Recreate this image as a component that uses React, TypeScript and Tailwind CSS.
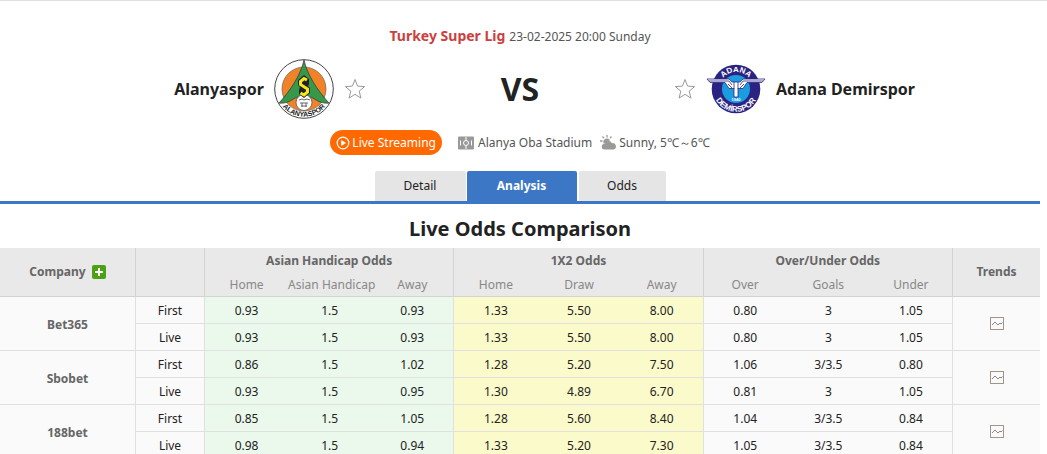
interface CompanyOdds {
  name: string;
  first: string[];
  live: string[];
}

const COMPANIES: CompanyOdds[] = [
  {
    name: "Bet365",
    first: ["0.93", "1.5", "0.93", "1.33", "5.50", "8.00", "0.80", "3", "1.05"],
    live: ["0.93", "1.5", "0.93", "1.33", "5.50", "8.00", "0.80", "3", "1.05"],
  },
  {
    name: "Sbobet",
    first: ["0.86", "1.5", "1.02", "1.28", "5.20", "7.50", "1.06", "3/3.5", "0.80"],
    live: ["0.93", "1.5", "0.95", "1.30", "4.89", "6.70", "0.81", "3", "1.05"],
  },
  {
    name: "188bet",
    first: ["0.85", "1.5", "1.05", "1.28", "5.60", "8.40", "1.04", "3/3.5", "0.84"],
    live: ["0.98", "1.5", "0.94", "1.33", "5.20", "7.30", "1.05", "3/3.5", "0.84"],
  },
];

const GROUPS = [
  { title: "Asian Handicap Odds", columns: ["Home", "Asian Handicap", "Away"], cell: "bg-[#ebf8ec]" },
  { title: "1X2 Odds", columns: ["Home", "Draw", "Away"], cell: "bg-[#fbfacb]" },
  { title: "Over/Under Odds", columns: ["Over", "Goals", "Under"], cell: "bg-[#fafafa]" },
];

export default function App() {
  return (
    <div className="h-screen overflow-hidden border-t border-[#e0e0e0] bg-white pr-[7px] font-['Noto_Sans',Tahoma,sans-serif] text-xs text-[#222]">
      <MatchHeader />
      <Tabs />
      <h2 className="pt-[11px] pb-[5px] text-center text-xl leading-7 font-bold">Live Odds Comparison</h2>
      <OddsTable />
    </div>
  );
}

function MatchHeader() {
  return (
    <header className="pt-6">
      <div className="flex items-baseline justify-center gap-1 leading-6">
        <a href="#league" className="text-sm font-bold text-[#cc3f3f]">
          Turkey Super Lig
        </a>
        <span className="text-[#555]">23-02-2025 20:00 Sunday</span>
      </div>

      <div className="mt-2.5 grid grid-cols-[1fr_308px_1fr] items-center">
        <div className="flex items-center justify-end gap-2.5">
          <a href="#alanyaspor" className="text-base font-bold">
            Alanyaspor
          </a>
          <AlanyasporLogo />
          <StarButton label="Follow Alanyaspor" />
        </div>
        <div className="text-center text-[32px] leading-[58px] font-bold">VS</div>
        <div className="flex items-center gap-2.5">
          <StarButton label="Follow Adana Demirspor" />
          <DemirsporLogo />
          <a href="#adana-demirspor" className="text-base font-bold">
            Adana Demirspor
          </a>
        </div>
      </div>

      <div className="mt-[11px] flex items-center justify-center gap-2 text-[#555]">
        <button className="mr-2 flex h-[25px] items-center gap-0.5 rounded-full bg-[#ff6900] px-1.5 text-white">
          <svg viewBox="0 0 14 14" className="size-3.5" fill="none">
            <circle cx="7" cy="7" r="5.8" stroke="currentColor" strokeWidth="1.2" />
            <path d="M5.2 4v6l4.8-3z" fill="currentColor" />
          </svg>
          Live Streaming
        </button>
        <span className="flex items-center gap-1">
          <StadiumIcon />
          Alanya Oba Stadium
        </span>
        <span className="flex items-center gap-0.5">
          <WeatherIcon />
          Sunny, 5℃～6℃
        </span>
      </div>
    </header>
  );
}

function Tabs() {
  return (
    <nav className="mt-4 flex h-[33px] justify-center border-b-3 border-[#3c77c6] text-center leading-[30px]">
      <a href="#detail" className="mr-px w-[91px] rounded-t-xs bg-[#e5e5e5]">
        Detail
      </a>
      <a href="#analysis" className="mr-0.5 w-[110px] rounded-t-xs bg-[#3c77c6] font-bold text-white">
        Analysis
      </a>
      <a href="#odds" className="w-[87px] rounded-t-xs bg-[#e5e5e5]">
        Odds
      </a>
    </nav>
  );
}

function OddsTable() {
  return (
    <table className="w-full table-fixed border-separate border-spacing-0 text-center">
      <colgroup>
        <col className="w-[136px]" />
        <col className="w-[69px]" />
        <col span={9} />
        <col className="w-[87px]" />
      </colgroup>
      <thead className="bg-[#e9e9e9] text-[#666]">
        <tr className="h-[25px]">
          <th rowSpan={2} className="border-r border-b border-[#d3d3d3]">
            <span className="flex items-center justify-center gap-1.5">
              Company
              <button aria-label="Add company" className="rounded-xs bg-[#4ba214] text-white">
                <svg viewBox="0 0 14 14" className="size-3.5">
                  <path d="M7 3v8M3 7h8" stroke="currentColor" strokeWidth="2" />
                </svg>
              </button>
            </span>
          </th>
          <th rowSpan={2} className="border-r border-b border-[#d3d3d3]" />
          {GROUPS.map((g) => (
            <th key={g.title} colSpan={3} className="border-r border-[#d3d3d3]">
              {g.title}
            </th>
          ))}
          <th rowSpan={2} className="border-b border-[#d3d3d3]">
            Trends
          </th>
        </tr>
        <tr className="h-6 text-[#888]">
          {GROUPS.map((g) =>
            g.columns.map((c, i) => (
              <th
                key={g.title + c}
                className={`border-b border-[#d3d3d3] font-normal whitespace-nowrap ${i === 2 ? "border-r" : ""}`}
              >
                {c}
              </th>
            )),
          )}
        </tr>
      </thead>
      <tbody className="bg-[#fafafa]">
        {COMPANIES.map((company) => [
          <tr key={`${company.name}-first`} className="h-[27px]">
            <th rowSpan={2} className="border-r border-b border-[#e0e0e0] pt-0.5 text-[#666]">
              {company.name}
            </th>
            <td className="border-r border-b border-[#e0e0e0] pt-0.5">First</td>
            <OddsCells odds={company.first} />
            <td rowSpan={2} className="border-b border-[#e0e0e0]">
              <button aria-label={`${company.name} trends`} className="block w-full">
                <TrendIcon />
              </button>
            </td>
          </tr>,
          <tr key={`${company.name}-live`} className="h-[27px]">
            <td className="border-r border-b border-[#e0e0e0] pt-0.5">Live</td>
            <OddsCells odds={company.live} />
          </tr>,
        ])}
      </tbody>
    </table>
  );
}

function OddsCells({ odds }: { odds: string[] }) {
  return odds.map((value, i) => (
    <td
      key={i}
      className={`border-b border-[#e0e0e0] pt-0.5 ${GROUPS[Math.floor(i / 3)].cell} ${i % 3 === 2 ? "border-r" : ""}`}
    >
      {value}
    </td>
  ));
}

function StarButton({ label }: { label: string }) {
  return (
    <button aria-label={label}>
      <svg viewBox="0 0 22 22" className="size-[22px]" fill="none" stroke="#999">
        <path d="M11 1.5l2.6 6.6 7 .5-5.4 4.5 1.7 7L11 16.3l-5.9 3.8 1.7-7L1.4 8.6l7-.5z" />
      </svg>
    </button>
  );
}

function StadiumIcon() {
  return (
    <svg viewBox="0 0 16 14" className="h-3.5 w-4" fill="none">
      <rect y=".5" width="16" height="13" rx="1" fill="#999" />
      <g stroke="#fff">
        <circle cx="8" cy="7" r="2.5" />
        <path d="M8 1v3M8 10v3M2.5 4.5v5M13.5 4.5v5" />
      </g>
    </svg>
  );
}

function WeatherIcon() {
  return (
    <svg viewBox="0 0 17 16" className="h-4 w-[17px]" fill="#999">
      <path d="M7 0v2.5M2.5 1.5l1.4 1.7M11.5 1.5l-1.4 1.7M0 6h2.5" stroke="#999" strokeWidth="1.3" />
      <path d="M3.5 8a3.6 3.6 0 0 1 6.7-2.5C8 5.5 6.8 6.5 6.2 8 5 8 4.3 8.5 4 9z" />
      <path d="M4.5 14.5a2.9 2.9 0 0 1 .4-5.8 3.8 3.8 0 0 1 7-.5 3.2 3.2 0 0 1 1.6 6.3z" />
    </svg>
  );
}

function TrendIcon() {
  return (
    <svg viewBox="0 0 14 14" className="mx-auto size-3.5" fill="none">
      <rect x=".5" y=".5" width="13" height="12" stroke="#a3948a" />
      <path d="M2 8l3-3 3 3 2-2 1 1 1.5-1.5" stroke="#888" />
    </svg>
  );
}

function AlanyasporLogo() {
  return (
    <svg viewBox="0 0 60 60" className="size-[60px]" role="img" aria-label="Alanyaspor crest">
      <circle cx="30" cy="30" r="29.3" fill="#fff" stroke="#444" />
      <circle cx="30" cy="30" r="22" fill="#f08228" stroke="#555" strokeWidth=".6" />
      <path
        d="M30 1C27 15 17 31 5 44c6 1 12-2 16-5 4-2 14-2 18 0 4 3 10 6 16 5C43 31 33 15 30 1z"
        fill="#36984a"
        stroke="#333"
        strokeWidth=".7"
      />
      <circle cx="30" cy="43.5" r="8" fill="#fff" stroke="#555" strokeWidth=".8" />
      <path d="M25 41l3-1 2 1 3-1 3 1M26 44h8M27 47h6M28 44v4M32 44v4" stroke="#666" fill="none" />
      <path d="M30 16l5 4v5l-1 2 2 2v5l-6 5-5-4v-4l1-3-2-2v-5z" fill="#222" />
      <path d="M33 21l-3-1.5-3.5 3v3l7 4.5v3L30 36l-3.500-2" fill="none" stroke="#fae61e" strokeWidth="3" />
      <path id="alanya-arc" d="M3.2 37a27.7 27.7 0 0 0 53.6 0" fill="none" />
      <text className="font-['Liberation_Sans',sans-serif] text-[7px] font-bold" fill="#222" textAnchor="middle">
        <textPath href="#alanya-arc" startOffset="50%">
          ALANYASPOR
        </textPath>
      </text>
    </svg>
  );
}

function DemirsporLogo() {
  return (
    <svg viewBox="0 0 60 52" className="h-[52px] w-[60px]" role="img" aria-label="Adana Demirspor crest">
      <circle cx="30" cy="26" r="24.3" fill="#2b2382" />
      <circle cx="30" cy="26" r="14" fill="#1c9ce0" />
      <path
        d="M1 16h22l3 3h8l3-3h22l-3 3.5H41l-4 6h-5V34h-4v-8.5h-5l-4-6H4z"
        fill="#fff"
        stroke="#2b2382"
        strokeWidth=".8"
      />
      <path d="M3 18h20l3 4M57 18H37l-3 4M22 21l4 4M38 21l-4 4" fill="none" stroke="#2b2382" strokeWidth=".8" />
      <path d="M28 19v7M32 19v7" stroke="#2b2382" strokeWidth=".8" />
      <text x="30" y="38" className="font-['Liberation_Sans',sans-serif] text-[4px] font-bold" fill="#fff" textAnchor="middle">
        1940
      </text>
      <path id="adana-arc" d="M13.5 22a17 17 0 0 1 33 0" fill="none" />
      <path id="demir-arc" d="M7.2 26a22.8 22.8 0 0 0 45.6 0" fill="none" />
      <g className="font-['Liberation_Sans',sans-serif] text-[8px] font-bold" fill="#fff" textAnchor="middle">
        <text>
          <textPath href="#adana-arc" startOffset="50%">
            ADANA
          </textPath>
        </text>
        <text>
          <textPath href="#demir-arc" startOffset="50%">
            DEMİRSPOR
          </textPath>
        </text>
      </g>
    </svg>
  );
}
